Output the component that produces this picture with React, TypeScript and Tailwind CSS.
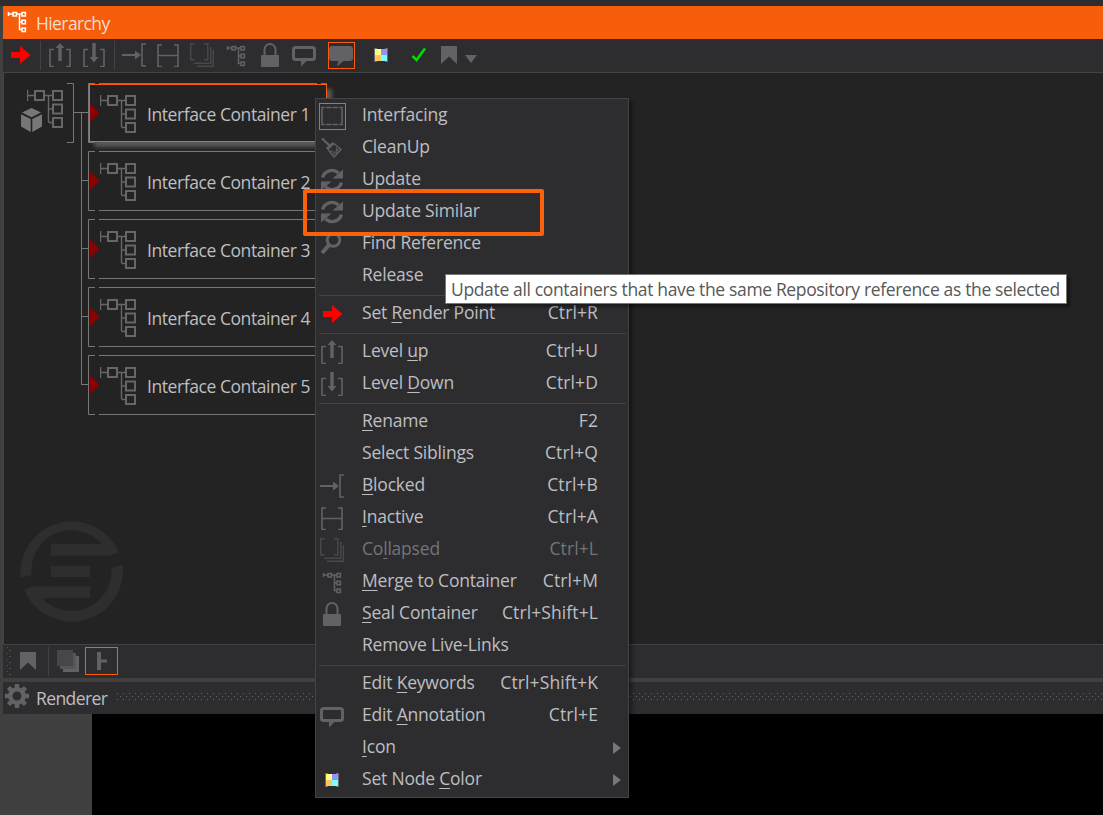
import type { ReactNode } from 'react'

type IconName =
    | 'arrow'
    | 'levelUp'
    | 'levelDown'
    | 'blocked'
    | 'inactive'
    | 'collapsed'
    | 'merge'
    | 'lock'
    | 'comment'
    | 'commentFilled'
    | 'colors'
    | 'interfacing'
    | 'broom'
    | 'refresh'
    | 'search'

const GREY = '#626266'

const icons: Record<IconName, ReactNode> = {
    arrow: <path d="M3 9h9V3l10.5 9L12 21v-6H3z" fill="#ff0000" />,
    levelUp: (
        <>
            <path d="M6 6.5H2v17h4M18 6.5h4v17h-4" fill="none" stroke={GREY} strokeWidth="1.6" />
            <path d="M10.3 18V5H7.5L12 0l4.5 5h-2.8v13z" fill={GREY} />
        </>
    ),
    levelDown: (
        <>
            <path d="M6 6.5H2v17h4M18 6.5h4v17h-4" fill="none" stroke={GREY} strokeWidth="1.6" />
            <path d="M10.3 0v14H7.5l4.5 5.5 4.5-5.5h-2.8V0z" fill={GREY} />
        </>
    ),
    blocked: (
        <>
            <path d="M24 1h-4v22h4" fill="none" stroke={GREY} strokeWidth="1.6" />
            <path d="M0 11h13V7.500l6 4.500-6 4.500V13H0z" fill={GREY} />
        </>
    ),
    inactive: (
        <path d="M6 2H2v21.5h4M18 2h4v21.5h-4M2 12.5h20" fill="none" stroke={GREY} strokeWidth="1.6" />
    ),
    collapsed: (
        <path
            d="M4.5 .7H.7v16h3.8M14 .7h3.8v16H14M4 20.3h16.8V4M7 23.3h16.3V7"
            fill="none"
            stroke="#48484b"
            strokeWidth="1.4"
        />
    ),
    merge: (
        <g fill="none" stroke="currentColor" strokeWidth="1.5">
            <path d="M3.5 3v4M3.5 5H8M12 5h5M14.5 5v15.500H17M14.5 13H17" />
            <path d="M8 3.500h3.400v3.400H8zM17 3.500h3.400v3.400H17zM17 11.300h3.400v3.400H17zM17 19h3.400v3.400H17z" />
        </g>
    ),
    lock: (
        <>
            <path d="M6.5 13V6.500a5.500 5.500 0 0 1 11 0V13" fill="none" stroke={GREY} strokeWidth="2" />
            <rect x="3" y="12" width="18" height="12" rx="1" fill={GREY} />
        </>
    ),
    comment: (
        <>
            <rect x="1.5" y="4.5" width="21" height="12" rx="2" fill="none" stroke={GREY} strokeWidth="3" />
            <path d="M9 17h6.5L9 23.5z" fill={GREY} />
        </>
    ),
    commentFilled: <path d="M2 3h20l2 2v11l-2 2h-7.500L8 23.500l1.500-5.500H2l-2-2V5z" fill={GREY} />,
    colors: (
        <>
            <path d="M5 5h3v14H5zM16 5h3v14h-3z" fill="#69696b" />
            <path d="M6 6h6v6H6z" fill="#ffff80" />
            <path d="M12 6h6v6h-6z" fill="#9292fb" />
            <path d="M6 12h6v6H6z" fill="#ffc562" />
            <path d="M12 12h6v6h-6z" fill="#78ffff" />
        </>
    ),
    interfacing: (
        <>
            <path d="M5 3.500H2v17h3M19 3.500h3v17h-3" fill="none" stroke={GREY} strokeWidth="1.6" />
            <path d="M6 3.500h5.500M12.500 3.500H18M6 20.500h5.500M12.500 20.500H18" stroke={GREY} strokeWidth="1.5" />
        </>
    ),
    broom: (
        <g fill="none" stroke={GREY}>
            <path d="M2 2.500l7.500 7" strokeWidth="2.200" />
            <path d="M7 13l6.500-6" strokeWidth="3" />
            <path d="M8 13.500l6 7.500 7-7.500-7-6" strokeWidth="1.400" />
            <path d="M11 16l1.500-1.500M13 18.500l2-3M16 17.500l.5-3.500M18.500 14.500L16 12" strokeWidth="1.200" />
        </g>
    ),
    refresh: (
        <>
            <path d="M2.500 9.500a9.800 9.800 0 0 1 16-4.500M21.500 14.500a9.800 9.800 0 0 1-16 4.500" fill="none" stroke={GREY} strokeWidth="3.400" />
            <path d="M23 1.500v9H12.500zM1 22.500v-9h10.500z" fill={GREY} />
        </>
    ),
    search: (
        <g fill="none" stroke={GREY}>
            <circle cx="13.5" cy="8" r="6.300" strokeWidth="3" />
            <path d="M9 13l-7 8" strokeWidth="4" />
        </g>
    ),
}

const Icon = ({ name, className = 'text-[#626266]' }: { name: IconName; className?: string }) => (
    <svg width="24" height="24" viewBox="0 0 24 24" className={`shrink-0 ${className}`}>
        {icons[name]}
    </svg>
)

const ToolButton = ({ name }: { name: IconName }) => (
    <button type="button" className="flex h-full w-[34px] shrink-0 items-center justify-center">
        <Icon name={name} />
    </button>
)

const ToolSeparator = () => <div className="ml-[3px] mr-0.5 h-[29px] w-px shrink-0 bg-[#434346]" />

const TreeIcon = () => (
    <svg width="36" height="38" viewBox="0 0 36 38" fill="none" stroke="#67676a" className="shrink-0">
        <path d="M.5 0v11M0 5.500h7M18 5.500h7M21.500 5.500V32M21.500 19H25M21.500 32.500H25" strokeWidth="1.4" />
        <path d="M8 1h9v9H8zM26 1h9v9h-9zM26 14.500h9v9h-9zM26 28h9v9h-9z" strokeWidth="2" />
    </svg>
)

const Bookmark = () => (
    <svg width="16" height="18" viewBox="0 0 16 18" className="shrink-0">
        <path d="M0 0h16v18l-8-7.500L0 18z" fill={GREY} />
    </svg>
)

const containers = [1, 2, 3, 4, 5]

const ContainerNode = ({ index }: { index: number }) => (
    <div className="relative flex h-[60px] w-[239px] items-center">
        <svg width="239" height="60" className="absolute inset-0 overflow-visible">
            <path d="M7 .5H.5v59H7M11 .5h218M11 59.500h218M233 .5h5.500v59H233" fill="none" stroke="#77777a" />
        </svg>
        {index === 1 && (
            <div className="absolute top-px left-px h-[58px] w-[238px] border border-[#f75d0b] bg-[#232323] shadow-[5px_5px_4px_#59595b]" />
        )}
        <svg width="10" height="20" viewBox="0 0 10 20" className="relative ml-0.5 shrink-0">
            <path d="M0 .5L9.500 10 0 19.500z" fill="#8b0000" />
        </svg>
        <div className="relative mt-0.5">
            <TreeIcon />
        </div>
        <span className="relative mt-0.5 ml-[11px] text-[17.5px] leading-6 tracking-[-0.43px] whitespace-nowrap">
            Interface Container {index}
        </span>
    </div>
)

const Logo = () => (
    <svg width="104" height="104" viewBox="0 0 104 104" fill="#2e2e2e" className="absolute bottom-[21px] left-4">
        <path d="M.7 59A51.300 51.300 0 0 1 99 33.700L88 36.700H31V25h50.700A40 40 0 0 0 11.700 55.700z" />
        <path d="M31 47h39v11H31z" />
        <path d="M102.700 45.700A51.300 51.300 0 0 1 4 70.300L15 67.200h55.300V79H22a40 40 0 0 0 69.400-30z" />
    </svg>
)

const Hierarchy = () => (
    <div className="relative h-[571px] overflow-hidden bg-[#232323]">
        <svg width="90" height="330" className="absolute top-0 left-0" fill="none" stroke="#77777a">
            <path d="M63 10.500h6.500v59H63M69.500 39.500H84M77.500 39.500v272M77 107.500h7M77 175.500h7M77 243.500h7M77 311.500h7" />
        </svg>
        <div className="flex pt-[10px]">
            <div className="relative w-[84px] pt-[7px] pl-[23px]">
                <TreeIcon />
                <svg width="21" height="24" viewBox="0 0 21 24" className="absolute top-[25px] left-[17px]" fill="#77777a">
                    <path d="M10.500 0L20 4.500 10.500 9.300 1 4.500zM0 6.200l9.700 4.900V24L0 18.600zM21 6.200l-9.700 4.900V24L21 18.600z" />
                </svg>
            </div>
            <div className="flex flex-col gap-2">
                {containers.map((index) => (
                    <ContainerNode key={index} index={index} />
                ))}
            </div>
        </div>
        <Logo />
    </div>
)

interface Item {
    label: string
    // position of the underlined access key inside the label
    key?: number
    shortcut?: string
    icon?: IconName
    boxed?: boolean
    disabled?: boolean
    submenu?: boolean
}

const groups: Item[][] = [
    [
        { label: 'Interfacing', icon: 'interfacing', boxed: true },
        { label: 'CleanUp', icon: 'broom' },
        { label: 'Update', icon: 'refresh' },
        { label: 'Update Similar', icon: 'refresh' },
        { label: 'Find Reference', icon: 'search' },
        { label: 'Release' },
    ],
    [{ label: 'Set Render Point', key: 4, shortcut: 'Ctrl+R', icon: 'arrow' }],
    [
        { label: 'Level up', key: 6, shortcut: 'Ctrl+U', icon: 'levelUp' },
        { label: 'Level Down', key: 6, shortcut: 'Ctrl+D', icon: 'levelDown' },
    ],
    [
        { label: 'Rename', key: 0, shortcut: 'F2' },
        { label: 'Select Siblings', shortcut: 'Ctrl+Q' },
        { label: 'Blocked', key: 0, shortcut: 'Ctrl+B', icon: 'blocked' },
        { label: 'Inactive', key: 0, shortcut: 'Ctrl+A', icon: 'inactive' },
        { label: 'Collapsed', key: 2, shortcut: 'Ctrl+L', icon: 'collapsed', disabled: true },
        { label: 'Merge to Container', key: 0, shortcut: 'Ctrl+M', icon: 'merge' },
        { label: 'Seal Container', key: 0, shortcut: 'Ctrl+Shift+L', icon: 'lock' },
        { label: 'Remove Live-Links' },
    ],
    [
        { label: 'Edit Keywords', key: 5, shortcut: 'Ctrl+Shift+K' },
        { label: 'Edit Annotation', key: 5, shortcut: 'Ctrl+E', icon: 'comment' },
        { label: 'Icon', key: 0, submenu: true },
        { label: 'Set Node Color', key: 9, icon: 'colors', submenu: true },
    ],
]

const MenuLabel = ({ label, at }: { label: string; at?: number }) => {
    if (at === undefined) return <span>{label}</span>
    return (
        <span>
            {label.slice(0, at)}
            <span className="underline decoration-1 underline-offset-[3px]">{label[at]}</span>
            {label.slice(at + 1)}
        </span>
    )
}

const MenuItem = ({ item }: { item: Item }) => (
    <div className={`flex h-8 items-center ${item.disabled ? 'text-[#747476]' : 'text-[#bebec0]'}`}>
        <div
            className={`mt-[3px] ml-[3px] flex h-[27px] w-[27px] shrink-0 items-start justify-start border ${
                item.boxed ? 'border-[#f75d0b]' : 'border-transparent'
            }`}
        >
            {item.icon && <Icon name={item.icon} />}
        </div>
        <div className="ml-4 flex flex-1 justify-between pb-0.5 tracking-[-0.2px] whitespace-nowrap">
            <MenuLabel label={item.label} at={item.key} />
            {item.shortcut && <span className="tracking-[0.1px]">{item.shortcut}</span>}
        </div>
        <div className="flex w-[30px] shrink-0 pt-0.5 pl-[15px]">
            {item.submenu && (
                <svg width="8" height="12" viewBox="0 0 8 12">
                    <path d="M0 0l8 6-8 6z" fill="#77777a" />
                </svg>
            )}
        </div>
    </div>
)

const ContextMenu = () => (
    <div className="absolute top-[98px] left-[315px] h-[700px] w-[314px] border border-[#434346] bg-[#2d2d30] text-[17.5px] leading-6 shadow-[3px_3px_4px_rgba(0,0,0,0.45)]">
        {groups.map((group, i) => (
            <div key={i}>
                {i > 0 && (
                    <div className="h-1.5 pt-1 pr-0.5 pl-[3px]">
                        <div className="h-px bg-[#434346]" />
                    </div>
                )}
                {group.map((item) => (
                    <MenuItem key={item.label} item={item} />
                ))}
            </div>
        ))}
    </div>
)

const Toolbar = () => (
    <div className="flex h-[33px] items-center bg-[#2d2d30] pb-px">
        <ToolButton name="arrow" />
        <ToolSeparator />
        <ToolButton name="levelUp" />
        <ToolButton name="levelDown" />
        <ToolSeparator />
        <ToolButton name="blocked" />
        <ToolButton name="inactive" />
        <ToolButton name="collapsed" />
        <ToolButton name="merge" />
        <ToolButton name="lock" />
        <ToolButton name="comment" />
        <div className="mt-px ml-[7px] flex h-[27px] w-[27px] items-start justify-start border border-[#f75d0b]">
            <Icon name="commentFilled" />
        </div>
        <div className="ml-[9px] flex">
            <ToolButton name="colors" />
        </div>
        <svg width="16" height="15" viewBox="0 0 16 15" className="mb-0.5 ml-[13px]">
            <path d="M1.500 9l4 4L14 1.500" fill="none" stroke="#00dc00" strokeWidth="2.500" />
        </svg>
        <div className="ml-[14px]">
            <Bookmark />
        </div>
        <svg width="12" height="8" viewBox="0 0 12 8" className="mt-[7px] ml-2">
            <path d="M0 0h12L6 8z" fill={GREY} />
        </svg>
    </div>
)

const BottomBar = () => (
    <div className="flex h-[34px] items-center border-t border-[#434346] bg-[#2d2d30] pb-px">
        <svg width="8" height="30" className="ml-1 shrink-0" fill="#505053">
            {[0, 1, 2, 3, 4].map((i) => (
                <g key={i}>
                    <path d={`M0 ${1 + i * 6}h1v1H0z`} />
                    <path d={`M2 ${4 + i * 6}h2v1H2z`} />
                </g>
            ))}
        </svg>
        <div className="ml-[5px]">
            <Bookmark />
        </div>
        <div className="ml-3 h-[29px] w-px bg-[#434346]" />
        <svg width="22" height="22" viewBox="0 0 22 22" className="ml-2">
            <path d="M6 6h16v16H6z" fill={GREY} />
            <path d="M3 3h16v16H3z" fill="#55555a" />
            <path d="M0 0h16v16H0z" fill="#47474a" />
        </svg>
        <div className="ml-1.5 flex h-7 w-[33px] items-center justify-center border border-[#f75d0b]">
            <svg width="10" height="18" viewBox="0 0 10 18">
                <path d="M0 0h4v7.500h6v3H4V18H0z" fill={GREY} />
            </svg>
        </div>
    </div>
)

const gearTeeth = [0, 45, 90, 135, 180, 225, 270, 315]

const RendererHeader = () => (
    <div className="flex h-8 bg-[#2d2d30]">
        <svg width="24" height="24" viewBox="-12 -12 24 24" className="mt-0.5 ml-0.5 shrink-0">
            <circle r="6.700" fill="none" stroke={GREY} strokeWidth="4.500" />
            {gearTeeth.map((angle) => (
                <path key={angle} d="M-2.200-12h4.400v4h-4.400z" fill={GREY} transform={`rotate(${angle})`} />
            ))}
        </svg>
        <span className="mt-1 ml-[7px] w-[81px] shrink-0 text-[17.5px] leading-6 tracking-[-0.6px]">Renderer</span>
        <svg height="7" className="mt-[11px] flex-1">
            <pattern id="grip" width="6" height="6" patternUnits="userSpaceOnUse">
                <path d="M0 0h1v1H0zM3 3h1v1H3z" fill="#69696c" />
            </pattern>
            <rect width="100%" height="7" fill="url(#grip)" />
        </svg>
    </div>
)

const App = () => {
    return (
        <div className="relative h-[815px] w-[1103px] overflow-hidden bg-[#404040] font-['Open_Sans',sans-serif] text-[#bebec0]">
            <div className="h-1.5 bg-[#2d2d30]" />
            <div className="pl-[3px]">
                <div className="flex h-[33px] bg-[#f75d0b]">
                    <div className="mt-[3px] ml-0.5">
                        <Icon name="merge" className="text-white" />
                    </div>
                    <span className="mt-[5px] ml-[7px] text-[17.5px] leading-6 tracking-[-0.6px] text-[#f3dcd0]">Hierarchy</span>
                </div>
                <Toolbar />
                <div className="border-t border-l border-[#434346]">
                    <Hierarchy />
                </div>
                <BottomBar />
                <div className="h-1" />
                <RendererHeader />
                <div className="flex h-[101px] pl-[89px]">
                    <div className="flex-1 bg-black" />
                </div>
            </div>

            <ContextMenu />
            <div className="absolute top-[189px] left-[303px] h-[47px] w-[241px] rounded-[2px] border-4 border-[#fb600b]" />
            <div className="absolute top-[274px] left-[445px] h-[30px] w-[622px] border border-[#767676] bg-white pl-[5px] text-[17.5px] leading-[29px] tracking-[-0.35px] whitespace-nowrap text-[#575757] shadow-[3px_3px_3px_rgba(0,0,0,0.4)]">
                Update all containers that have the same Repository reference as the selected
            </div>
        </div>
    )
}

export default App
